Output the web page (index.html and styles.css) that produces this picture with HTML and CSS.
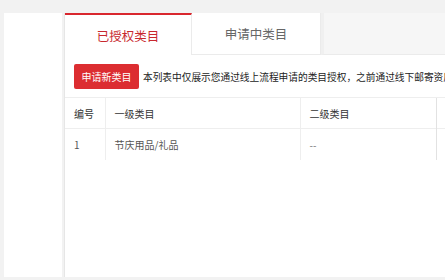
FILE: index.html
```html
<!DOCTYPE html>
<html lang="zh-CN">
<head>
<meta charset="utf-8">
<title>类目授权</title>
<link rel="stylesheet" href="styles.css">
</head>
<body>
<div class="page">
  <aside class="sidebar"></aside>
  <main class="main">
    <nav class="tabs">
      <div class="tab tab-active">已授权类目</div>
      <div class="tab">申请中类目</div>
      <div class="tab-rest"></div>
    </nav>
    <section class="content">
      <div class="toolbar">
        <button class="btn-apply">申请新类目</button>
        <span class="notice">本列表中仅展示您通过线上流程申请的类目授权，之前通过线下邮寄资质申请的类目授权不在此列表中展示</span>
      </div>
      <table class="grid">
        <colgroup>
          <col class="c1"><col class="c2"><col class="c3"><col class="c4">
        </colgroup>
        <thead>
          <tr><th>编号</th><th>一级类目</th><th>二级类目</th><th></th></tr>
        </thead>
        <tbody>
          <tr><td>1</td><td>节庆用品/礼品</td><td class="muted">--</td><td></td></tr>
        </tbody>
      </table>
    </section>
  </main>
</div>
</body>
</html>
```

FILE: styles.css
```css
html, body {
  margin: 0;
  padding: 0;
}
body {
  background: #f2f2f2;
  font-family: "Noto Sans CJK SC", "Noto Sans", "Liberation Sans", sans-serif;
  color: #333;
  overflow: hidden;
  width: 445px;
  height: 280px;
}
.page {
  display: flex;
  padding: 13px 0 0 4px;
  height: 264px;
  gap: 2px;
}
.sidebar {
  flex: none;
  width: 58px;
  background: #fff;
}
.main {
  flex: none;
  width: 560px;
  display: flex;
  flex-direction: column;
  border-left: 1px solid #e6e6e6;
}
.tabs {
  display: flex;
  height: 42px;
  background: #f6f6f6;
}
.tab {
  box-sizing: border-box;
  width: 128px;
  height: 42px;
  display: flex;
  align-items: center;
  justify-content: center;
  font-size: 12.5px;
  color: #666;
  background: #fff;
  border-right: 1px solid #ebebeb;
  border-bottom: 1px solid #ebebeb;
}
.tab-active {
  width: 127px;
  color: #c8282e;
  border-top: 2px solid #d9272e;
  border-bottom: none;
}
.tab + .tab {
  width: 129px;
}
.tab-rest {
  flex: 1;
  border-left: 3px solid #f0f0f0;
  border-bottom: 1px solid #ebebeb;
}
.content {
  flex: 1;
  background: #fff;
  padding-top: 9px;
}
.toolbar {
  display: flex;
  align-items: center;
  gap: 4px;
  padding-left: 9px;
  white-space: nowrap;
}
.btn-apply {
  flex: none;
  width: 65px;
  height: 25px;
  border: none;
  border-radius: 2px;
  background: #dc2d31;
  color: #fff;
  font-family: inherit;
  font-size: 10px;
  padding: 0;
}
.notice {
  font-size: 9.7px;
  color: #222;
}
.grid {
  margin-top: 8px;
  border-collapse: collapse;
  table-layout: fixed;
  width: 100%;
  font-size: 10px;
}
.c1 { width: 40px; }
.c2 { width: 195px; }
.c3 { width: 136px; }
.grid th,
.grid td {
  text-align: left;
  font-weight: normal;
  padding: 0 0 0 9px;
  border-top: 1px solid #eeeeee;
  border-left: 1px solid #eeeeee;
}
.grid th:first-child,
.grid td:first-child {
  border-left: none;
}
.grid th:last-child,
.grid td:last-child {
  border-left-color: #e2e2e2;
}
.grid th {
  height: 30px;
  color: #333;
}
.grid td {
  height: 31px;
  color: #555;
}
.grid .muted {
  color: #777;
}
```
